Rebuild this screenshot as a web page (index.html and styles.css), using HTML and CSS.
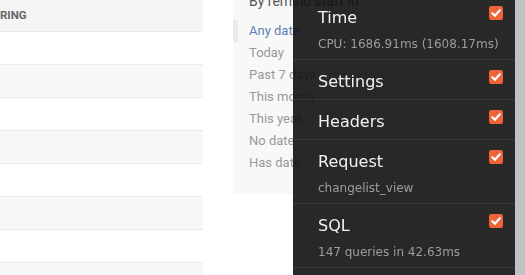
FILE: index.html
```html
<!DOCTYPE html>
<html>
<head>
    <title>Change list</title>
    <meta charset="UTF-8">
    <link rel="stylesheet" href="styles.css">
</head>
<body>
    <div class="page">
        <div class="results">
            <table class="result-list">
                <thead>
                    <tr><th>RING</th></tr>
                </thead>
                <tbody>
                    <tr class="row1"><td></td></tr>
                    <tr class="row2"><td></td></tr>
                    <tr class="row1"><td></td></tr>
                    <tr class="row2"><td></td></tr>
                    <tr class="row1"><td></td></tr>
                    <tr class="row2"><td></td></tr>
                    <tr class="row1"><td></td></tr>
                    <tr class="row2"><td></td></tr>
                </tbody>
            </table>
        </div>

        <div class="filter">
            <h3 class="filter-title">By remind staff in</h3>
            <ul class="filter-list">
                <li class="selected"><a href="#">Any date</a></li>
                <li><a href="#">Today</a></li>
                <li><a href="#">Past 7 days</a></li>
                <li><a href="#">This month</a></li>
                <li><a href="#">This year</a></li>
                <li><a href="#">No date</a></li>
                <li><a href="#">Has date</a></li>
            </ul>
        </div>
    </div>

    <!-- debug toolbar, lies over the page -->
    <div class="djdt">
        <ul class="djdt-panels">
            <li class="djdt-panel">
                <a href="#" class="djdt-link">
                    <span class="djdt-name">Time<small>CPU: 1686.91ms (1608.17ms)</small></span>
                    <span class="djdt-check"><svg width="14" height="14" viewBox="0 0 14 14"><path d="M3.3 7.2 L5.9 9.8 L10.8 4.2" fill="none" stroke="#fff" stroke-width="2.2" stroke-linecap="round" stroke-linejoin="round"/></svg></span>
                </a>
            </li>
            <li class="djdt-panel">
                <a href="#" class="djdt-link">
                    <span class="djdt-name">Settings</span>
                    <span class="djdt-check"><svg width="14" height="14" viewBox="0 0 14 14"><path d="M3.3 7.2 L5.9 9.8 L10.8 4.2" fill="none" stroke="#fff" stroke-width="2.2" stroke-linecap="round" stroke-linejoin="round"/></svg></span>
                </a>
            </li>
            <li class="djdt-panel">
                <a href="#" class="djdt-link">
                    <span class="djdt-name">Headers</span>
                    <span class="djdt-check"><svg width="14" height="14" viewBox="0 0 14 14"><path d="M3.3 7.2 L5.9 9.8 L10.8 4.2" fill="none" stroke="#fff" stroke-width="2.2" stroke-linecap="round" stroke-linejoin="round"/></svg></span>
                </a>
            </li>
            <li class="djdt-panel">
                <a href="#" class="djdt-link">
                    <span class="djdt-name">Request<small>changelist_view</small></span>
                    <span class="djdt-check"><svg width="14" height="14" viewBox="0 0 14 14"><path d="M3.3 7.2 L5.9 9.8 L10.8 4.2" fill="none" stroke="#fff" stroke-width="2.2" stroke-linecap="round" stroke-linejoin="round"/></svg></span>
                </a>
            </li>
            <li class="djdt-panel">
                <a href="#" class="djdt-link">
                    <span class="djdt-name">SQL<small>147 queries in 42.63ms</small></span>
                    <span class="djdt-check"><svg width="14" height="14" viewBox="0 0 14 14"><path d="M3.3 7.2 L5.9 9.8 L10.8 4.2" fill="none" stroke="#fff" stroke-width="2.2" stroke-linecap="round" stroke-linejoin="round"/></svg></span>
                </a>
            </li>
            <li class="djdt-panel">
                <a href="#" class="djdt-link">
                    <span class="djdt-name">Static files</span>
                    <span class="djdt-check"><svg width="14" height="14" viewBox="0 0 14 14"><path d="M3.3 7.2 L5.9 9.8 L10.8 4.2" fill="none" stroke="#fff" stroke-width="2.2" stroke-linecap="round" stroke-linejoin="round"/></svg></span>
                </a>
            </li>
        </ul>
        <div class="djdt-scrollbar"></div>
    </div>
</body>
</html>
```

FILE: styles.css
```css
* {
    margin: 0;
    padding: 0;
    box-sizing: border-box;
}

body {
    font-family: Roboto, 'Liberation Sans', sans-serif;
    background: #fff;
    color: #333;
    overflow: hidden;
    height: 275px;
}

.page {
    display: flex;
    align-items: flex-start;
    gap: 30px;
}

/* result table */

.results {
    width: 203px;
    flex-shrink: 0;
}

.result-list {
    width: 100%;
    border-collapse: collapse;
}

.result-list th {
    height: 31px;
    padding: 0;
    text-align: left;
    font-size: 11.5px;
    font-weight: 700;
    color: #666;
    background: #f5f5f5;
    border-bottom: 1px solid #eaeaea;
}

.result-list td {
    height: 33px;
    border-bottom: 1px solid #eaeaea;
}

.row1 {
    background: #fff;
}

.row2 {
    background: #f8f8f8;
}

/* filter */

.filter {
    width: 240px;
    flex-shrink: 0;
    background: #f8f8f8;
    padding-bottom: 20px;
}

.filter-title {
    margin-top: -7px;
    padding: 0 15px 0 16px;
    font-size: 14px;
    font-weight: 400;
    line-height: 16px;
    color: #555;
}

.filter-list {
    list-style: none;
    margin-top: 11px;
}

.filter-list li {
    padding: 1px 15px 1px 16px;
    font-size: 13px;
    line-height: 20px;
}

.filter-list li.selected {
    border-left: 5px solid #ebebeb;
    padding-left: 11px;
}

.filter-list a {
    color: #999;
    text-decoration: none;
}

.filter-list li.selected a {
    color: #5b80b2;
}

/* debug toolbar */

.djdt {
    position: fixed;
    top: 0;
    right: 0;
    bottom: 0;
    display: flex;
}

.djdt-panels {
    width: 222px;
    list-style: none;
    background: rgba(17, 17, 17, 0.9);
    font-family: 'DejaVu Sans', sans-serif;
    overflow: hidden;
}

.djdt-panel {
    border-bottom: 1px solid #3a3a3a;
}

.djdt-panel:first-child {
    margin-top: -4px;
}

.djdt-link {
    display: flex;
    align-items: flex-start;
    padding: 12px 12px 7px 25px;
    color: #f2f2f2;
    text-decoration: none;
    font-size: 16px;
    line-height: 20px;
}

.djdt-name {
    flex: 1;
    min-width: 0;
    white-space: nowrap;
}

.djdt-name small {
    display: block;
    margin-top: 8px;
    font-size: 12px;
    line-height: 16px;
    color: #9d9d9d;
}

.djdt-check {
    flex-shrink: 0;
    width: 14px;
    height: 14px;
    margin-top: -2px;
    border-radius: 2px;
    background: #ee6436;
    display: flex;
}

.djdt-scrollbar {
    width: 10px;
    background: #c2c2c2;
}
```
